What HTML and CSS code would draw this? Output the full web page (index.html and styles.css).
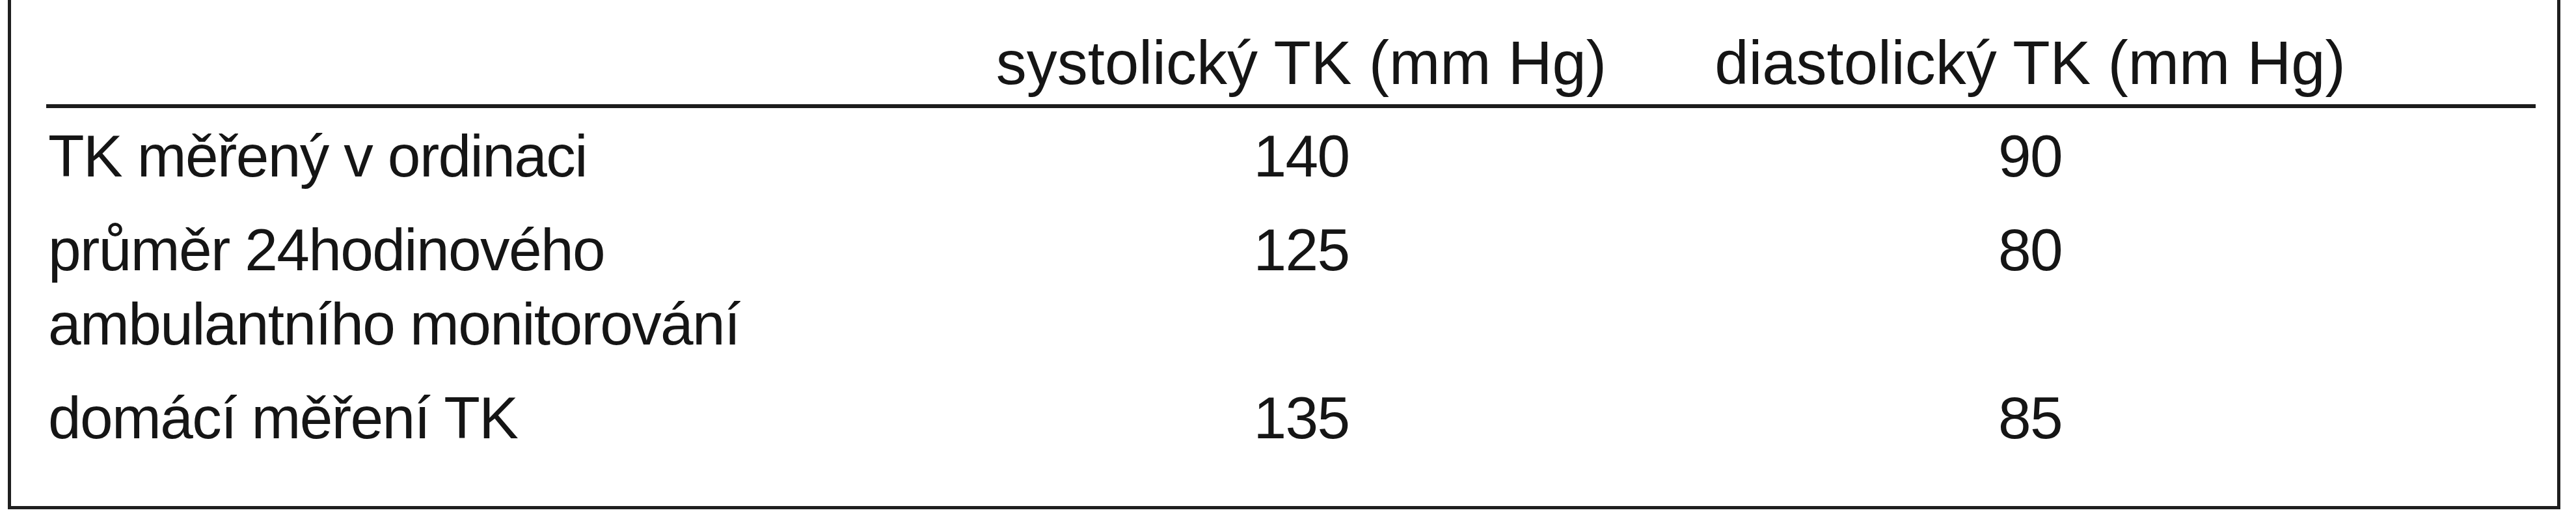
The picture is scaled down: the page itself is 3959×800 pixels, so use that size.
FILE: index.html
```html
<!DOCTYPE html>
<html lang="cs">
<head>
<meta charset="utf-8">
<title>Hodnoty TK</title>
<link rel="stylesheet" href="styles.css">
</head>
<body>
<div class="frame">
  <table class="bp-table">
    <colgroup>
      <col class="c-label">
      <col class="c-val">
      <col class="c-val">
      <col class="c-rest">
    </colgroup>
    <thead>
      <tr>
        <th class="h-label"></th>
        <th class="h-val">systolický TK (mm Hg)</th>
        <th class="h-val">diastolický TK (mm Hg)</th>
        <th class="h-rest"></th>
      </tr>
    </thead>
    <tbody>
      <tr>
        <td class="label">TK měřený v ordinaci</td>
        <td class="val">140</td>
        <td class="val">90</td>
        <td></td>
      </tr>
      <tr>
        <td class="label">průměr 24hodinového<br>ambulantního monitorování</td>
        <td class="val">125</td>
        <td class="val">80</td>
        <td></td>
      </tr>
      <tr>
        <td class="label">domácí měření TK</td>
        <td class="val">135</td>
        <td class="val">85</td>
        <td></td>
      </tr>
    </tbody>
  </table>
</div>
</body>
</html>
```

FILE: styles.css
```css
html, body {
  margin: 0;
  padding: 0;
  background: #ffffff;
}

body {
  width: 3959px;
  height: 800px;
  overflow: hidden;
  font-family: "Liberation Sans", Arial, sans-serif;
  color: #151515;
}

.frame {
  box-sizing: border-box;
  margin-left: 12px;
  width: 3923px;
  height: 782px;
  border-left: 5px solid #1f1f1f;
  border-right: 5px solid #1f1f1f;
  border-bottom: 5px solid #1f1f1f;
  padding: 0 33px 0 54px;
}

.bp-table {
  border-collapse: collapse;
  border-spacing: 0;
  table-layout: fixed;
  width: 3826px;
}

.c-label { width: 1369px; }
.c-val { width: 1120px; }
.c-rest { width: 217px; }

.bp-table th {
  font-weight: normal;
  font-size: 94px;
  line-height: 114px;
  padding: 40px 0 6px 0;
  border-bottom: 6px solid #1c1c1c;
  white-space: nowrap;
}

.bp-table th.h-val {
  text-align: center;
}

.bp-table td {
  font-size: 91px;
  line-height: 114px;
  letter-spacing: -1.6px;
  padding: 17px 0 13px 0;
  vertical-align: top;
  white-space: nowrap;
}

.bp-table td.label {
  text-align: left;
  padding-left: 3px;
}

.bp-table td.val {
  text-align: center;
}
```
